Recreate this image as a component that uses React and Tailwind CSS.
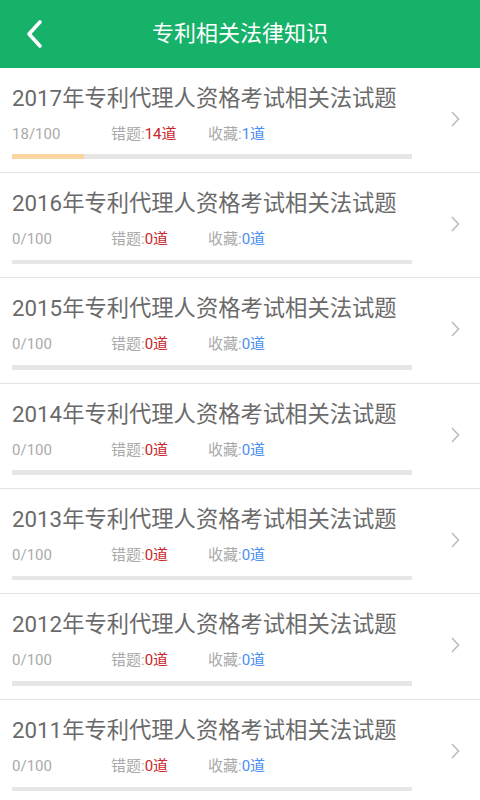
import React from "react";

const rows = [
  { year: 2017, done: 18, wrong: 14, fav: 1 },
  { year: 2016, done: 0, wrong: 0, fav: 0 },
  { year: 2015, done: 0, wrong: 0, fav: 0 },
  { year: 2014, done: 0, wrong: 0, fav: 0 },
  { year: 2013, done: 0, wrong: 0, fav: 0 },
  { year: 2012, done: 0, wrong: 0, fav: 0 },
  { year: 2011, done: 0, wrong: 0, fav: 0 },
];

const font = { fontFamily: "Roboto, 'Noto Sans CJK SC', sans-serif" };

export default function App() {
  return (
    <div className="w-[480px] h-[800px] overflow-hidden bg-white" style={font}>
      <div className="h-[67.5px] bg-[#16b26a] flex items-center relative">
        <svg className="absolute left-[24px] top-[19px]" width="22" height="30" viewBox="0 0 22 30">
          <path d="M16 3 L5 15 L16 27" fill="none" stroke="#fff" strokeWidth="3.6" strokeLinecap="round" strokeLinejoin="round" />
        </svg>
        <div className="w-full text-center text-white text-[22px] leading-[30px]">专利相关法律知识</div>
      </div>
      {rows.map((r) => (
        <div key={r.year} className="h-[104.4px] border-b border-[#e2e2e2] box-content flex relative">
          <div className="pl-[12px] pt-[15px] flex flex-col">
            <div className="text-[22.3px] leading-[30px] text-[#6a6a6a] whitespace-nowrap">
              {r.year}年专利代理人资格考试相关法试题
            </div>
            <div className="mt-[11px] h-[20px] flex items-center text-[15px] leading-[20px] text-[#aaaaaa]">
              <span className="w-[99px]">{r.done}/100</span>
              <span className="w-[97px]">
                错题:<span className="text-[#c8262a]">{r.wrong}道</span>
              </span>
              <span>
                收藏:<span className="text-[#4a8ef0]">{r.fav}道</span>
              </span>
            </div>
            <div className="mt-[10.8px] w-[400px] h-[4.5px] bg-[#e6e6e6]">
              <div className="h-full bg-[#fcd6a2]" style={{ width: `${r.done}%` }} />
            </div>
          </div>
          <svg className="absolute left-[449px] top-[42px]" width="12" height="18" viewBox="0 0 12 18">
            <path d="M3 2 L9.5 9 L3 16" fill="none" stroke="#bdbdbd" strokeWidth="1.6" />
          </svg>
        </div>
      ))}
    </div>
  );
}
